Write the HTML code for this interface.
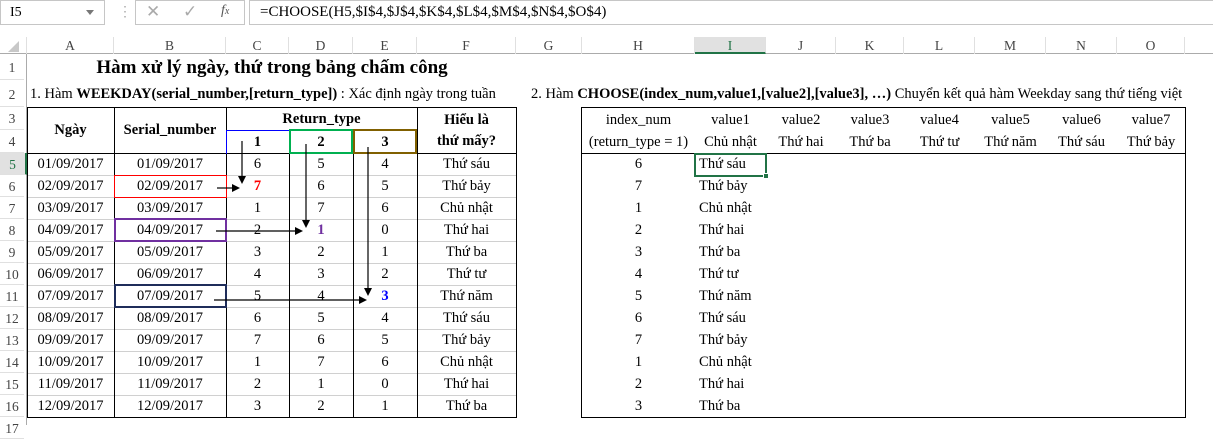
<!DOCTYPE html><html><head><meta charset="utf-8"><style>
*{margin:0;padding:0;box-sizing:border-box}
body{width:1213px;height:425px;position:relative;background:#fff;font-family:"Liberation Serif",serif;font-size:14.5px;color:#000;overflow:hidden}
div{position:absolute}
.t{text-align:center;white-space:nowrap}
.ch{top:37px;height:17px;line-height:17px;color:#444;font-size:13.5px;text-align:center;border-right:1px solid #e0e0e0}
.rh{left:0;width:24px;text-align:center;color:#444;font-size:13.5px;border-bottom:1px solid #e0e0e0}
.hl{height:0;border-top:1px solid #000}
.vl{width:0;border-left:1px solid #000}
.g{height:0;border-top:1px solid #d0d0d0}
</style></head><body>
<div style="left:0;top:0;width:1213px;height:37px;background:#fff;border-bottom:1px solid #d8d8d8"></div>
<div style="left:0;top:0;width:105px;height:25px;border:1px solid #c6c6c6;font-size:14px;line-height:23px;padding-left:9px">I5</div>
<div style="left:86px;top:10px;width:0;height:0;border-left:4px solid transparent;border-right:4px solid transparent;border-top:5px solid #777"></div>
<div style="left:118px;top:4px;color:#aaa;font-size:14px">⋮</div>
<div style="left:135px;top:0;width:110px;height:25px;border:1px solid #c6c6c6"></div>
<div style="left:146px;top:2px;color:#aaa;font-size:17px">✕</div>
<div style="left:183px;top:2px;color:#aaa;font-size:17px">✓</div>
<div style="left:221px;top:3px;color:#555;font-size:14px;font-style:italic">f<span style="font-size:10px">x</span></div>
<div style="left:249px;top:0;width:964px;height:25px;border:1px solid #c6c6c6;border-right:none;line-height:23px;padding-left:10px;font-size:15px">=CHOOSE(H5,$I$4,$J$4,$K$4,$L$4,$M$4,$N$4,$O$4)</div>
<div style="left:0;top:25px;width:1213px;height:12px;background:#fff"></div>
<div style="left:0;top:37px;width:1213px;height:17px;background:#fff;border-bottom:1px solid #ababab"></div>
<div style="left:8px;top:41px;width:0;height:0;border-left:11px solid transparent;border-bottom:11px solid #c8c8c8"></div>
<div class="ch" style="left:0;width:27px"></div>
<div class="ch" style="left:27px;width:87px">A</div>
<div class="ch" style="left:114px;width:112px">B</div>
<div class="ch" style="left:226px;width:63px">C</div>
<div class="ch" style="left:289px;width:64px">D</div>
<div class="ch" style="left:353px;width:64px">E</div>
<div class="ch" style="left:417px;width:99px">F</div>
<div class="ch" style="left:516px;width:66px">G</div>
<div class="ch" style="left:582px;width:113px">H</div>
<div class="ch" style="left:695px;width:71px;background:#e1e1e1;border-bottom:2px solid #217346;color:#217346">I</div>
<div class="ch" style="left:766px;width:70px">J</div>
<div class="ch" style="left:836px;width:68px">K</div>
<div class="ch" style="left:904px;width:71px">L</div>
<div class="ch" style="left:975px;width:71px">M</div>
<div class="ch" style="left:1046px;width:71px">N</div>
<div class="ch" style="left:1117px;width:68px">O</div>
<div style="left:26px;top:54px;width:1px;height:371px;background:#ababab"></div>
<div class="rh" style="top:54px;height:26px;line-height:28px">1</div>
<div class="rh" style="top:80px;height:27px;line-height:30px">2</div>
<div class="rh" style="top:107px;height:23px;line-height:24px">3</div>
<div class="rh" style="top:130px;height:23px;line-height:24px">4</div>
<div class="rh" style="top:153px;height:22px;line-height:23px;background:#e1e1e1;color:#217346;border-right:2px solid #217346;width:27px">5</div>
<div class="rh" style="top:175px;height:22px;line-height:23px">6</div>
<div class="rh" style="top:197px;height:22px;line-height:23px">7</div>
<div class="rh" style="top:219px;height:22px;line-height:23px">8</div>
<div class="rh" style="top:241px;height:22px;line-height:23px">9</div>
<div class="rh" style="top:263px;height:22px;line-height:23px">10</div>
<div class="rh" style="top:285px;height:22px;line-height:23px">11</div>
<div class="rh" style="top:307px;height:22px;line-height:23px">12</div>
<div class="rh" style="top:329px;height:22px;line-height:23px">13</div>
<div class="rh" style="top:351px;height:22px;line-height:23px">14</div>
<div class="rh" style="top:373px;height:22px;line-height:23px">15</div>
<div class="rh" style="top:395px;height:22px;line-height:23px">16</div>
<div class="rh" style="top:417px;height:22px;line-height:23px">17</div>

<div class="t" style="left:27px;width:490px;top:56px;font-size:19px;font-weight:bold;line-height:24px">Hàm xử lý ngày, thứ trong bảng chấm công</div>
<div style="left:30px;top:84px;white-space:nowrap;line-height:20px">1. Hàm <b>WEEKDAY(serial_number,[return_type])</b> : Xác định ngày trong tuần</div>
<div style="left:531px;top:84px;white-space:nowrap;line-height:20px">2. Hàm <b>CHOOSE(index_num,value1,[value2],[value3], …)</b> Chuyển kết quả hàm Weekday sang thứ tiếng việt</div>

<div class="g" style="left:27px;width:489px;top:175px"></div><div class="g" style="left:27px;width:489px;top:197px"></div><div class="g" style="left:27px;width:489px;top:219px"></div><div class="g" style="left:27px;width:489px;top:241px"></div><div class="g" style="left:27px;width:489px;top:263px"></div><div class="g" style="left:27px;width:489px;top:285px"></div><div class="g" style="left:27px;width:489px;top:307px"></div><div class="g" style="left:27px;width:489px;top:329px"></div><div class="g" style="left:27px;width:489px;top:351px"></div><div class="g" style="left:27px;width:489px;top:373px"></div><div class="g" style="left:27px;width:489px;top:395px"></div>
<div class="hl" style="left:27px;width:490px;top:107px"></div>
<div class="hl" style="left:27px;width:490px;top:153px"></div>
<div class="hl" style="left:27px;width:490px;top:417px"></div>
<div class="vl" style="left:27px;top:107px;height:311px"></div>
<div class="vl" style="left:114px;top:107px;height:311px"></div>
<div class="vl" style="left:226px;top:107px;height:311px"></div>
<div class="vl" style="left:289px;top:153px;height:265px"></div>
<div class="vl" style="left:353px;top:153px;height:265px"></div>
<div class="vl" style="left:417px;top:107px;height:311px"></div>
<div class="vl" style="left:516px;top:107px;height:311px"></div>
<div class="t" style="left:27px;width:87px;top:120px;font-weight:bold;line-height:20px">Ngày</div>
<div class="t" style="left:114px;width:112px;top:120px;font-weight:bold;line-height:20px">Serial_number</div>
<div class="t" style="left:226px;width:191px;top:109px;font-weight:bold;line-height:20px">Return_type</div>
<div class="t" style="left:226px;width:63px;top:132px;font-weight:bold;line-height:20px">1</div>
<div class="t" style="left:289px;width:64px;top:132px;font-weight:bold;line-height:20px">2</div>
<div class="t" style="left:353px;width:64px;top:132px;font-weight:bold;line-height:20px">3</div>
<div class="t" style="left:417px;width:99px;top:110px;font-weight:bold;line-height:21px">Hiểu là<br>thứ mấy?</div>
<div style="left:226px;top:130px;width:64px;height:24px;border-top:1px solid #00f;border-left:1px solid #00f"></div>
<div style="left:289px;top:129px;width:64px;height:25px;border:2px solid #00b050"></div>
<div style="left:353px;top:129px;width:64px;height:25px;border:2px solid #806000"></div>
<div style="left:114px;top:175px;width:113px;height:23px;border:1px solid #f00"></div>
<div style="left:114px;top:218px;width:113px;height:24px;border:2px solid #7030a0"></div>
<div style="left:114px;top:284px;width:113px;height:24px;border:2px solid #1f2d5a"></div>

<div style="left:27px;top:153px;width:87px;line-height:22px" class="t">01/09/2017<br>02/09/2017<br>03/09/2017<br>04/09/2017<br>05/09/2017<br>06/09/2017<br>07/09/2017<br>08/09/2017<br>09/09/2017<br>10/09/2017<br>11/09/2017<br>12/09/2017</div>
<div style="left:114px;top:153px;width:112px;line-height:22px" class="t">01/09/2017<br>02/09/2017<br>03/09/2017<br>04/09/2017<br>05/09/2017<br>06/09/2017<br>07/09/2017<br>08/09/2017<br>09/09/2017<br>10/09/2017<br>11/09/2017<br>12/09/2017</div>
<div style="left:226px;top:153px;width:63px;line-height:22px" class="t">6<br><b style="color:#f00">7</b><br>1<br>2<br>3<br>4<br>5<br>6<br>7<br>1<br>2<br>3</div>
<div style="left:289px;top:153px;width:64px;line-height:22px" class="t">5<br>6<br>7<br><b style="color:#7030a0">1</b><br>2<br>3<br>4<br>5<br>6<br>7<br>1<br>2</div>
<div style="left:353px;top:153px;width:64px;line-height:22px" class="t">4<br>5<br>6<br>0<br>1<br>2<br><b style="color:#00f">3</b><br>4<br>5<br>6<br>0<br>1</div>
<div style="left:417px;top:153px;width:99px;line-height:22px" class="t">Thứ sáu<br>Thứ bảy<br>Chủ nhật<br>Thứ hai<br>Thứ ba<br>Thứ tư<br>Thứ năm<br>Thứ sáu<br>Thứ bảy<br>Chủ nhật<br>Thứ hai<br>Thứ ba</div>

<svg style="position:absolute;left:0;top:0" width="1213" height="425">
<g stroke="#000" stroke-width="1.2" fill="#000">
<line x1="242" y1="141" x2="242" y2="178"/><polygon points="238,176 246,176 242,184" stroke="none"/>
<line x1="217" y1="188" x2="233" y2="188"/><polygon points="232,184 232,192 240,188" stroke="none"/>
<line x1="306" y1="144" x2="306" y2="222"/><polygon points="302,220 310,220 306,228" stroke="none"/>
<line x1="216" y1="231" x2="296" y2="231"/><polygon points="295,227 295,235 303,231" stroke="none"/>
<line x1="368" y1="147" x2="368" y2="290"/><polygon points="364,288 372,288 368,296" stroke="none"/>
<line x1="214" y1="300" x2="360" y2="300"/><polygon points="359,296 359,304 367,300" stroke="none"/>
</g></svg>

<div class="hl" style="left:581px;width:605px;top:107px"></div>
<div class="hl" style="left:581px;width:605px;top:153px"></div>
<div class="hl" style="left:581px;width:605px;top:417px"></div>
<div class="vl" style="left:581px;top:107px;height:311px"></div>
<div class="vl" style="left:1185px;top:107px;height:311px"></div>
<div class="t" style="left:582px;width:113px;top:109px;line-height:22px">index_num<br>(return_type = 1)</div>
<div class="t" style="left:695px;width:71px;top:109px;line-height:22px">value1<br>Chủ nhật</div>
<div class="t" style="left:766px;width:70px;top:109px;line-height:22px">value2<br>Thứ hai</div>
<div class="t" style="left:836px;width:68px;top:109px;line-height:22px">value3<br>Thứ ba</div>
<div class="t" style="left:904px;width:71px;top:109px;line-height:22px">value4<br>Thứ tư</div>
<div class="t" style="left:975px;width:71px;top:109px;line-height:22px">value5<br>Thứ năm</div>
<div class="t" style="left:1046px;width:71px;top:109px;line-height:22px">value6<br>Thứ sáu</div>
<div class="t" style="left:1117px;width:68px;top:109px;line-height:22px">value7<br>Thứ bảy</div>
<div style="left:582px;top:153px;width:113px;line-height:22px" class="t">6<br>7<br>1<br>2<br>3<br>4<br>5<br>6<br>7<br>1<br>2<br>3</div>
<div style="left:699px;top:153px;line-height:22px;white-space:nowrap">Thứ sáu<br>Thứ bảy<br>Chủ nhật<br>Thứ hai<br>Thứ ba<br>Thứ tư<br>Thứ năm<br>Thứ sáu<br>Thứ bảy<br>Chủ nhật<br>Thứ hai<br>Thứ ba</div>
<div style="left:694px;top:153px;width:73px;height:24px;border:2px solid #217346"></div>
<div style="left:763px;top:173px;width:6px;height:6px;background:#217346;border:1px solid #fff"></div>
</body></html>
